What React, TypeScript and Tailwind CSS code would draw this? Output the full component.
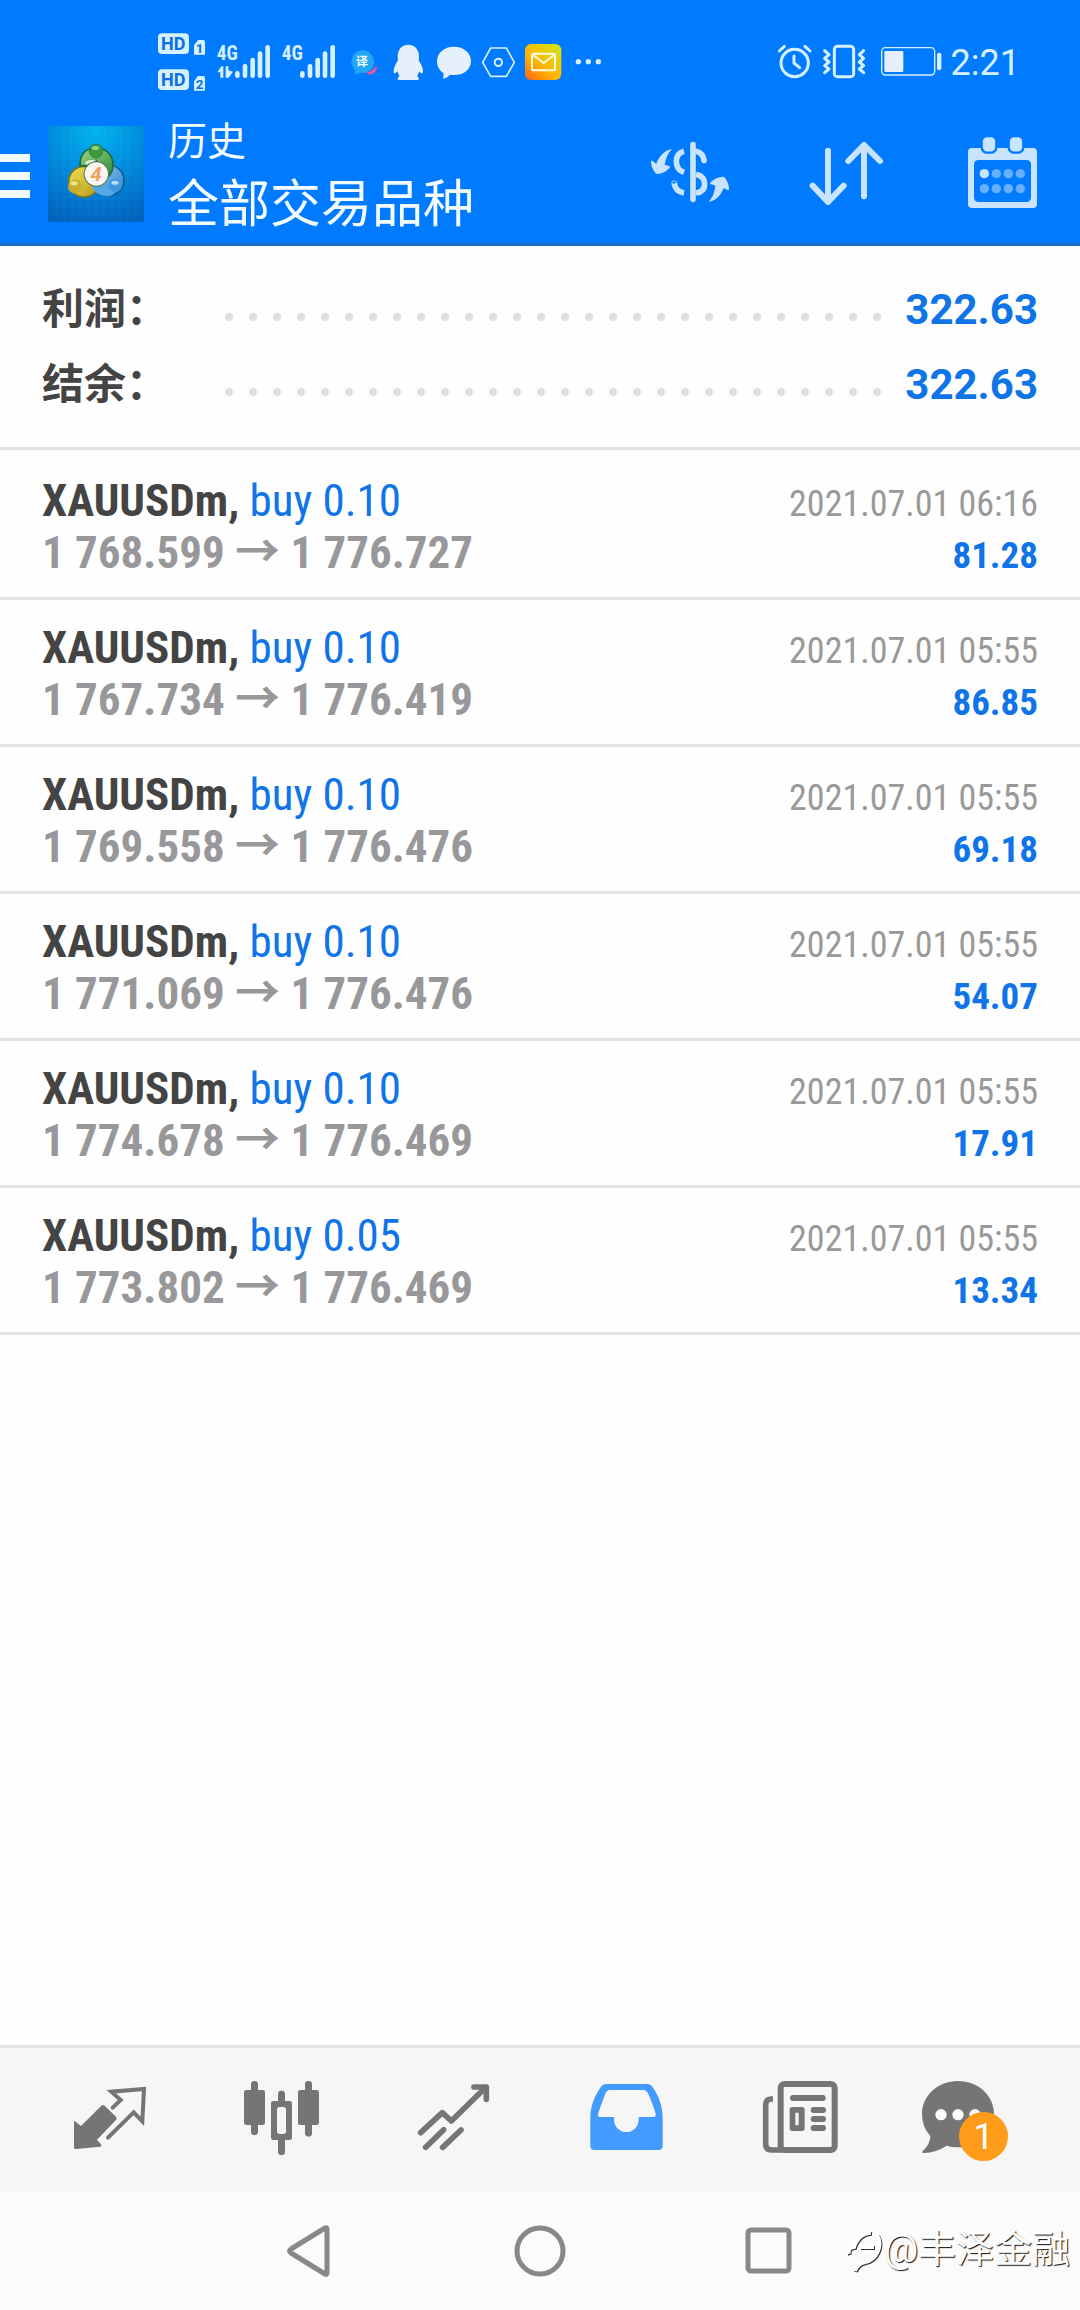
import React from "react";

type Deal = {
  symbol: string;
  side: string;
  open: string;
  close: string;
  time: string;
  profit: string;
};

const deals: Deal[] = [
  { symbol: "XAUUSDm,", side: "buy 0.10", open: "1 768.599", close: "1 776.727", time: "2021.07.01 06:16", profit: "81.28" },
  { symbol: "XAUUSDm,", side: "buy 0.10", open: "1 767.734", close: "1 776.419", time: "2021.07.01 05:55", profit: "86.85" },
  { symbol: "XAUUSDm,", side: "buy 0.10", open: "1 769.558", close: "1 776.476", time: "2021.07.01 05:55", profit: "69.18" },
  { symbol: "XAUUSDm,", side: "buy 0.10", open: "1 771.069", close: "1 776.476", time: "2021.07.01 05:55", profit: "54.07" },
  { symbol: "XAUUSDm,", side: "buy 0.10", open: "1 774.678", close: "1 776.469", time: "2021.07.01 05:55", profit: "17.91" },
  { symbol: "XAUUSDm,", side: "buy 0.05", open: "1 773.802", close: "1 776.469", time: "2021.07.01 05:55", profit: "13.34" },
];

const ICE = "#d5f1ff";

function HdBadges() {
  return (
    <svg className="h-[60px] w-[56px] shrink-0" viewBox="48 36 168 180" fill={ICE}>
      <rect x="54" y="40" width="93" height="62" rx="12" />
      <text x="100" y="91" textAnchor="middle" fontSize="54" fontWeight="700" fill="#0a6fe0" fontFamily="Roboto, sans-serif">HD</text>
      <path d="M162 76 L174 60 H190 Q195 60 195 66 V104 H162 Z" />
      <text x="179" y="100" textAnchor="middle" fontSize="40" fontWeight="700" fill="#0a6fe0" fontFamily="Roboto, sans-serif">1</text>
      <rect x="54" y="148" width="93" height="62" rx="12" />
      <text x="100" y="199" textAnchor="middle" fontSize="54" fontWeight="700" fill="#0a6fe0" fontFamily="Roboto, sans-serif">HD</text>
      <path d="M162 184 L174 168 H190 Q195 168 195 174 V212 H162 Z" />
      <text x="179" y="207" textAnchor="middle" fontSize="40" fontWeight="700" fill="#0a6fe0" fontFamily="Roboto, sans-serif">2</text>
    </svg>
  );
}

function SignalBars() {
  return (
    <g fill={ICE}>
      <rect x="285" y="153" width="14" height="21" rx="7" />
      <rect x="308" y="132" width="14" height="42" rx="7" />
      <rect x="331" y="113" width="14" height="61" rx="7" />
      <rect x="353" y="94" width="14" height="80" rx="7" />
      <rect x="376" y="75" width="14" height="99" rx="7" />
      <text x="230" y="119" fontSize="58" fontWeight="700" fontFamily="'Roboto Condensed', 'Liberation Sans Narrow', sans-serif">4G</text>
    </g>
  );
}

function StatusBar() {
  return (
    <div className="flex h-[105px] items-start pt-8 pr-[60px] pl-[156px]">
      <HdBadges />
      <svg className="h-[60px] w-[66px] shrink-0" viewBox="216 36 198 180">
        <SignalBars />
        <path d="M232 157 L244 139 H250 V173 H241 V157 Z M257 139 H265 V151 L279 155 L266 173 H257 Z" fill={ICE} />
      </svg>
      <svg className="h-[60px] w-[68px] shrink-0" viewBox="219 36 204 180">
        <SignalBars />
      </svg>
      <svg className="h-[60px] w-[40px] shrink-0" viewBox="618 36 120 180">
        <path d="M676 158 Q698 156 711 134 Q712 160 690 164 Z" fill="#e0569a" />
        <circle cx="668" cy="125" r="34" fill="#22a5f5" />
        <path d="M645 145 L645 164 L664 157 Z" fill="#22a5f5" />
        <text x="666" y="138" textAnchor="middle" fontSize="36" fontWeight="700" fill="#f2fbff" fontFamily="'Noto Sans CJK SC', sans-serif">译</text>
      </svg>
      <svg className="h-[60px] w-[44px] shrink-0" viewBox="48 36 132 180" fill="#e6f0fc">
        <path d="M115 74 C135 74 148 90 147 112 L146 120 C152 130 159 143 159 153 C159 160 157 162 151 158 L147 154 C146 160 144 164 141 168 C147 171 148 180 143 180 H87 C82 180 82 172 89 168 C86 164 84 160 83 154 L78 158 C72 162 71 160 71 153 C71 143 78 130 84 120 L83 112 C82 90 95 74 115 74 Z" />
      </svg>
      <svg className="h-[60px] w-[46px] shrink-0" viewBox="180 36 138 180" fill="#e6f0fc">
        <path d="M252 80 C282 80 303 99 303 123 C303 147 283 165 254 165 C249 165 245 165 241 164 C234 171 226 175 219 176 C220 171 221 165 221 160 C208 152 201 138 201 123 C201 99 222 80 252 80 Z" />
      </svg>
      <svg className="h-[60px] w-[44px] shrink-0" viewBox="318 36 132 180" fill="none" stroke={ICE} strokeLinejoin="round">
        <path d="M362 84 H409 L433 127 L409 169 H362 L338 127 Z" strokeWidth="5" />
        <circle cx="385" cy="127" r="11" strokeWidth="6" />
      </svg>
      <svg className="h-[60px] w-[46px] shrink-0" viewBox="450 36 138 180">
        <defs>
          <linearGradient id="mail" x1="0" y1="1" x2="0.8" y2="0">
            <stop offset="0" stopColor="#ff6418" />
            <stop offset="0.45" stopColor="#ffb400" />
            <stop offset="1" stopColor="#d8e014" />
          </linearGradient>
        </defs>
        <rect x="465" y="72" width="109" height="108" rx="18" fill="url(#mail)" />
        <rect x="486" y="101" width="69" height="50" rx="5" fill="none" stroke="#fffbe0" strokeWidth="6" />
        <path d="M488 104 L521 129 L553 104" fill="none" stroke="#fffbe0" strokeWidth="6" />
      </svg>
      <svg className="h-[60px] w-[44px] shrink-0" viewBox="588 36 132 180" fill={ICE}>
        <circle cx="625" cy="125" r="8" />
        <circle cx="655" cy="125" r="8" />
        <circle cx="685" cy="125" r="8" />
      </svg>
      <div className="ml-auto flex">
        <svg className="h-[60px] w-[46px] shrink-0" viewBox="30 36 138 180" fill="none" stroke={ICE} strokeWidth="9" strokeLinecap="round" strokeLinejoin="round">
          <circle cx="101" cy="129" r="41" />
          <path d="M99 108 V129 L116 143" />
          <path d="M55 93 L70 79 M132 79 L147 93" />
        </svg>
        <svg className="h-[60px] w-[56px] shrink-0" viewBox="168 36 168 180" fill="none" stroke={ICE} strokeWidth="9" strokeLinecap="round" strokeLinejoin="round">
          <rect x="220" y="79" width="58" height="91" rx="9" />
          <path d="M191 92 L204 104 L191 115 L204 126 L191 137 L204 147 L191 158" />
          <path d="M308 92 L295 104 L308 115 L295 126 L308 137 L295 147 L308 158" />
        </svg>
        <svg className="h-[60px] w-[78px] shrink-0" viewBox="336 36 234 180">
          <rect x="362" y="83" width="159" height="82" rx="11" fill="none" stroke={ICE} strokeWidth="4" />
          <rect x="370" y="93" width="57" height="63" rx="4" fill="#e6f0fc" />
          <rect x="528" y="98" width="13" height="53" rx="6" fill={ICE} />
        </svg>
        <time className="text-[36px] leading-[62px] text-[#d5f1ff]">2:21</time>
      </div>
    </div>
  );
}

function AppLogo() {
  return (
    <svg className="size-24 shrink-0" viewBox="144 47 288 288">
      <defs>
        <radialGradient id="sky" cx="0.5" cy="0.05" r="1">
          <stop offset="0" stopColor="#00b4ee" />
          <stop offset="0.5" stopColor="#008add" />
          <stop offset="1" stopColor="#0262bd" />
        </radialGradient>
        <linearGradient id="green" x1="0" y1="0" x2="1" y2="1">
          <stop offset="0" stopColor="#9bd78a" />
          <stop offset="1" stopColor="#2f8a38" />
        </linearGradient>
        <linearGradient id="gold" x1="0" y1="0" x2="1" y2="1">
          <stop offset="0" stopColor="#f3e04c" />
          <stop offset="1" stopColor="#b59a20" />
        </linearGradient>
        <linearGradient id="azure" x1="0" y1="0" x2="1" y2="1">
          <stop offset="0" stopColor="#8fd0f4" />
          <stop offset="1" stopColor="#2a7fd0" />
        </linearGradient>
      </defs>
      <rect x="144" y="47" width="288" height="288" fill="url(#sky)" />
      <path
        d="M168 47V335M192 47V335M216 47V335M240 47V335M264 47V335M288 47V335M312 47V335M336 47V335M360 47V335M384 47V335M408 47V335M144 71H432M144 95H432M144 119H432M144 143H432M144 167H432M144 191H432M144 215H432M144 239H432M144 263H432M144 287H432M144 311H432"
        stroke="#ffffff"
        strokeOpacity="0.07"
        strokeWidth="2"
      />
      <circle cx="326" cy="210" r="46" fill="url(#azure)" stroke="#125a96" strokeWidth="5" />
      <circle cx="252" cy="214" r="46" fill="url(#gold)" stroke="#7d7420" strokeWidth="5" />
      <path d="M240 165 C240 128 260 113 289 113 C320 113 340 136 339 165 C338 180 334 190 326 197 L288 150 L256 168 Z" fill="url(#green)" stroke="#1f6a36" strokeWidth="5" />
      <path d="M273 228 L304 228 L345 238 Q345 258 318 258 Q288 255 273 228 Z" fill="#54a9e4" />
      <path d="M254 158 Q262 146 288 150 L268 166 Z" fill="#e4f6da" />
      <circle cx="288" cy="122" r="20" fill="#3c9a3c" stroke="#1f6a36" strokeWidth="2" />
      <ellipse cx="286" cy="113" rx="11" ry="6" fill="#8fd386" />
      <circle cx="225" cy="229" r="21" fill="#c8ae2e" />
      <ellipse cx="222" cy="219" rx="11" ry="6" fill="#f2e68a" />
      <circle cx="346" cy="225" r="20" fill="#3f96dc" />
      <ellipse cx="345" cy="217" rx="11" ry="6" fill="#b4e0fa" />
      <circle cx="289" cy="191" r="38" fill="#4b7a4d" />
      <circle cx="289" cy="191" r="35" fill="#f8f5f4" />
      <text x="288" y="213" textAnchor="middle" fontSize="60" fontStyle="italic" fontWeight="700" fill="#f0a060" fontFamily="Roboto, sans-serif">4</text>
    </svg>
  );
}

function CurrencyIcon() {
  return (
    <svg className="size-[100px]" viewBox="60 42 300 300">
      <g fill="none" stroke="#c9e4ff" strokeWidth="17" strokeLinecap="round">
        <path d="M219 104 V268" />
        <path d="M192 124 C176 128 169 140 169 155 C169 171 176 181 192 187" strokeLinecap="butt" />
        <path d="M230 124 C243 128 251 137 252 151" />
        <path d="M163 220 C165 236 175 246 192 249" strokeLinecap="butt" />
        <circle cx="163" cy="220" r="1" strokeWidth="15" />
        <path d="M228 193 C244 197 254 206 254 222 C254 238 244 247 228 249" strokeLinecap="butt" />
      </g>
      <path d="M156 117 C143 130 137 147 134 164 L149 169 C150 171 150 173 148 175 C137 187 124 191 112 192 C108 192 106 189 104 186 C97 176 93 165 93 155 C93 152 96 152 99 154 L109 161 C117 140 132 121 156 117 Z" fill="#c9e4ff" />
      <path d="M265 276 C278 263 284 246 286 227 L272 222 C270 221 270 219 272 217 C282 206 296 201 308 200 C312 200 314 202 316 205 C323 215 327 226 327 238 C327 241 324 241 322 240 L311 234 C304 254 289 272 265 276 Z" fill="#c9e4ff" />
    </svg>
  );
}

function SortIcon() {
  return (
    <svg className="size-[100px]" viewBox="528 42 300 300" fill="none" stroke="#c9e4ff" strokeWidth="18" strokeLinecap="round" strokeLinejoin="round">
      <path d="M624 122 V276 M578 227 L624 276 L671 227" />
      <path d="M732 259 V105 M685 153 L732 105 L780 153" />
    </svg>
  );
}

function CalendarIcon() {
  return (
    <svg className="size-[100px]" viewBox="996 42 300 300">
      <path fillRule="evenodd" fill="#c9e4ff" d="M1056 114 H1239 Q1251 114 1251 126 V282 Q1251 294 1239 294 H1056 Q1044 294 1044 282 V126 Q1044 114 1056 114 Z M1076 150 Q1062 150 1062 164 V262 Q1062 276 1076 276 H1219 Q1233 276 1233 262 V164 Q1233 150 1219 150 Z" />
      <rect x="1085" y="78" width="44" height="50" rx="16" fill="#c9e4ff" stroke="#007aff" strokeWidth="7" />
      <rect x="1166" y="78" width="44" height="50" rx="16" fill="#c9e4ff" stroke="#007aff" strokeWidth="7" />
      <g fill="#66b0ff">
        <circle cx="1093" cy="191" r="14" fill="#c9e4ff" />
        <circle cx="1129" cy="191" r="14" />
        <circle cx="1165" cy="191" r="14" />
        <circle cx="1201" cy="191" r="14" />
        <circle cx="1093" cy="236" r="14" />
        <circle cx="1129" cy="236" r="14" />
        <circle cx="1165" cy="236" r="14" />
        <circle cx="1201" cy="236" r="14" />
      </g>
    </svg>
  );
}

const headerActions = [
  { label: "交易品种", icon: <CurrencyIcon /> },
  { label: "排序", icon: <SortIcon /> },
  { label: "日期", icon: <CalendarIcon /> },
];

function Header() {
  return (
    <div className="flex h-[138px] items-center">
      <button aria-label="菜单" className="mr-[18px] flex flex-col gap-[10px] pt-1">
        <span className="h-2 w-[30px] bg-[#f0faff]" />
        <span className="h-2 w-[30px] bg-[#f0faff]" />
        <span className="h-2 w-[30px] bg-[#f0faff]" />
      </button>
      <AppLogo />
      <div className="ml-6 text-[#f4fcff]">
        <p className="text-[39px] leading-[62px]">历史</p>
        <h1 className="text-[51px] leading-[64px]">全部交易品种</h1>
      </div>
      <div className="ml-auto flex">
        {headerActions.map((a) => (
          <button key={a.label} aria-label={a.label} className="flex w-[156px] justify-center">
            {a.icon}
          </button>
        ))}
      </div>
    </div>
  );
}

function SummaryLine({ label, value }: { label: string; value: string }) {
  return (
    <div className="flex h-[75px] items-center text-[42px] leading-[75px] font-bold">
      <dt className="w-[175px] text-[#444444]">{label}</dt>
      <div className="mt-[15px] h-6 flex-1 bg-[radial-gradient(circle,#e0e0e0_4px,transparent_4px)] bg-[length:24px_24px]" />
      <dd className="ml-[15px] text-[#0f74e8]">{value}</dd>
    </div>
  );
}

function DealRow({ deal }: { deal: Deal }) {
  return (
    <li className="border-b-[3px] border-[#e2e2e2] px-[42px] pt-[22px] pb-5 font-['Roboto_Condensed','Liberation_Sans_Narrow','Noto_Sans_CJK_SC',sans-serif]">
      <div className="flex h-[51px] items-baseline justify-between">
        <p className="text-[45px] leading-[51px] text-[#0f74e8]">
          <b className="text-[#444444]">{deal.symbol}</b> {deal.side}
        </p>
        <time className="text-[36px] leading-[51px] text-[#999999]">{deal.time}</time>
      </div>
      <div className="flex h-[51px] items-baseline justify-between font-bold">
        <p className="text-[45px] leading-[51px] text-[#98989a]">
          {deal.open} <span className="font-['Noto_Sans_CJK_SC'] leading-none">→</span> {deal.close}
        </p>
        <p className="text-[37px] leading-[51px] text-[#0f74e8]">{deal.profit}</p>
      </div>
    </li>
  );
}

const tabs = [
  {
    label: "行情",
    icon: (
      <svg className="size-[100px]" viewBox="60 87 300 300">
        <path d="M109 327 C104 328 102 325 102 321 V245 Q102 242 105 244 L123 258 L184 197 Q189 193 194 197 L228 230 Q232 235 228 240 L171 299 L184 314 Q186 319 181 320 Z" fill="#757575" />
        <path d="M218 203 L242 180 L214 155 L312 147 L307 244 L281 217 L204 293" fill="none" stroke="#757575" strokeWidth="12" strokeLinecap="round" />
      </svg>
    ),
  },
  {
    label: "图表",
    icon: (
      <svg className="size-[100px]" viewBox="576 87 300 300" fill="#757575">
        <rect x="633" y="123" width="21" height="162" rx="10" />
        <rect x="612" y="150" width="63" height="105" rx="7" />
        <rect x="795" y="123" width="21" height="167" rx="10" />
        <rect x="774" y="150" width="63" height="105" rx="7" />
        <rect x="714" y="152" width="21" height="193" rx="10" />
        <rect x="693" y="183" width="63" height="117" rx="7" />
        <rect x="711" y="201" width="27" height="81" rx="8" fill="#f6f6f6" />
      </svg>
    ),
  },
  {
    label: "交易",
    icon: (
      <svg className="size-[100px]" viewBox="1092 87 300 300" fill="none" stroke="#757575" strokeWidth="17" strokeLinecap="round" strokeLinejoin="round">
        <path d="M1142 278 L1207 218 L1234 243 L1336 143" />
        <path d="M1302 141 H1339 V178" />
        <path d="M1157 322 L1211 269 M1208 322 L1263 270" />
      </svg>
    ),
  },
  {
    label: "历史",
    active: true,
    icon: (
      <svg className="size-[100px]" viewBox="48 87 300 300">
        <path d="M138 132 H262 Q271 132 276 139 C296 167 308 198 308 232 V318 Q308 330 296 330 H103 Q91 330 91 318 V232 C91 198 104 167 124 139 Q129 132 138 132 Z" fill="#439bff" />
        <path d="M148 150 H250 Q259 150 263 158 C272 176 280 198 287 221 Q288 231 279 231 H236 V239 A37 37 0 0 1 162 239 V231 H122 Q112 231 114 221 C122 198 130 177 137 158 Q141 150 148 150 Z" fill="#f6f6f6" />
      </svg>
    ),
  },
  {
    label: "新闻",
    icon: (
      <svg className="size-[100px]" viewBox="564 87 300 300">
        <rect x="662" y="132" width="162" height="198" rx="12" fill="none" stroke="#757575" strokeWidth="18" />
        <path d="M639 177 H635 Q617 177 617 195 V312 Q617 330 635 330 H670" fill="none" stroke="#757575" strokeWidth="17" />
        <g fill="#757575">
          <rect x="690" y="165" width="107" height="18" rx="9" />
          <rect x="689" y="201" width="45" height="72" rx="8" />
          <rect x="752" y="201" width="46" height="18" rx="9" />
          <rect x="752" y="228" width="46" height="18" rx="9" />
          <rect x="752" y="255" width="46" height="18" rx="9" />
        </g>
        <rect x="706" y="218" width="10" height="38" rx="2" fill="#f6f6f6" />
      </svg>
    ),
  },
  {
    label: "信息",
    badge: "1",
    icon: (
      <svg className="size-[100px]" viewBox="1080 87 300 300">
        <path d="M1194 123 C1255 123 1302 167 1302 222 C1302 278 1255 322 1194 322 Q1176 322 1160 317 Q1128 338 1092 339 Q1083 339 1089 332 Q1111 312 1111 288 Q1086 262 1086 222 C1086 167 1134 123 1194 123 Z" fill="#757575" />
        <g fill="#fafafa">
          <circle cx="1143" cy="224" r="17" />
          <circle cx="1194" cy="224" r="17" />
          <circle cx="1245" cy="224" r="17" />
        </g>
      </svg>
    ),
  },
];

function TabBar() {
  return (
    <nav className="grid h-[147px] grid-cols-6 border-t-[3px] border-[#e4e4e4] bg-[#f6f6f6] px-6 pb-[2px]">
      {tabs.map((t) => (
        <button key={t.label} aria-label={t.label} aria-current={t.active ? "page" : undefined} className="flex items-center justify-center">
          <span className="relative">
            {t.icon}
            {t.badge && (
              <span className="absolute right-3 bottom-2 flex size-[49px] items-center justify-center rounded-full bg-[#ff9c1a] text-[36px] leading-none text-white">
                {t.badge}
              </span>
            )}
          </span>
        </button>
      ))}
    </nav>
  );
}

function SystemNav() {
  return (
    <div className="relative flex h-[118px] items-center justify-center gap-[130px] bg-[#fbfbfb]">
      <button aria-label="返回">
        <svg className="size-[100px]" viewBox="0 0 100 100" fill="none" stroke="#888888" strokeWidth="5" strokeLinejoin="round">
          <path d="M67 28 V72 Q67 74 65 73 L31 52 Q28 50 31 48 L65 27 Q67 26 67 28 Z" />
        </svg>
      </button>
      <button aria-label="主页">
        <svg className="size-[100px]" viewBox="0 0 100 100" fill="none" stroke="#888888" strokeWidth="5">
          <circle cx="50" cy="50" r="23" />
        </svg>
      </button>
      <button aria-label="最近任务">
        <svg className="size-[100px]" viewBox="0 0 100 100" fill="none" stroke="#888888" strokeWidth="5">
          <rect x="28" y="29" width="41" height="41" rx="3" />
        </svg>
      </button>
      <div className="absolute right-[10px] bottom-9 flex items-center text-[38px] leading-[50px] text-white [text-shadow:1px_1px_1px_#111111]">
        <svg className="h-[50px] w-[38px] drop-shadow-[1px_1px_0px_#333333]" viewBox="0 0 38 50" fill="none" stroke="#ffffff" strokeWidth="4">
          <path d="M3 30 Q1 24 8 23 C11 14 18 8 25 9 M14 23 H28 M31 11 C37 21 31 36 19 38 Q11 40 9 47" />
        </svg>
        @丰泽金融
      </div>
    </div>
  );
}

export default function App() {
  return (
    <div className="flex min-h-screen flex-col bg-[#fefefe] font-[Roboto,'Noto_Sans_CJK_SC',sans-serif]">
      <header className="border-b-[3px] border-[#1a6fc4] bg-[#007aff]">
        <StatusBar />
        <Header />
      </header>
      <main className="flex-1">
        <dl className="border-b-[3px] border-[#e2e2e2] px-[42px] pt-[26px] pb-[25px]">
          <SummaryLine label="利润：" value="322.63" />
          <SummaryLine label="结余：" value="322.63" />
        </dl>
        <ul className="pt-[3px]">
          {deals.map((d) => (
            <DealRow key={d.open} deal={d} />
          ))}
        </ul>
      </main>
      <TabBar />
      <SystemNav />
    </div>
  );
}
